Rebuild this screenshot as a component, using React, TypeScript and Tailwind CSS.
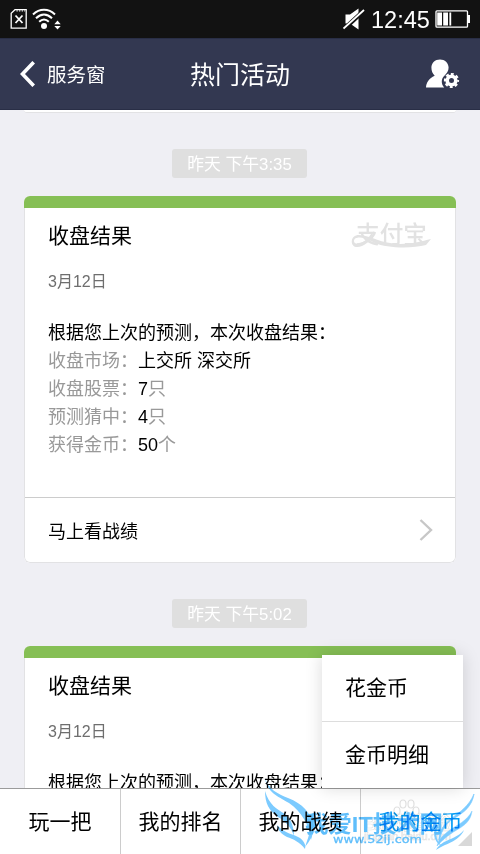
import { ReactNode } from 'react'

interface ResultCardProps {
  title: string
  date: string
}

const rows = [
  { label: '收盘市场：', value: '上交所 深交所', unit: '' },
  { label: '收盘股票：', value: '7', unit: '只' },
  { label: '预测猜中：', value: '4', unit: '只' },
  { label: '获得金币：', value: '50', unit: '个' },
]

const tabs = ['玩一把', '我的排名', '我的战绩', '我的金币']

function StatusBar() {
  return (
    <div className="flex h-[38px] shrink-0 items-center bg-[#121212] text-white">
      <svg className="ml-[10px] h-[22px] w-[18px]" viewBox="0 0 18 22" fill="none" stroke="currentColor">
        <path strokeWidth={1.3} d="M5 1.7H16.2V20.2H1.2V5.2Z" />
        <path strokeWidth={1.2} strokeDasharray="1.2 1.4" d="M6.5 2.8H15" />
        <path strokeWidth={1.8} d="M5.5 7.5L12.5 15M12.5 7.5L5.5 15" />
      </svg>
      <svg className="ml-[4px] h-[22px] w-[30px]" viewBox="0 0 30 22" fill="none" stroke="currentColor" strokeWidth={2}>
        <path d="M1 6.5C7.5 .2 16.5 .2 23 6.5" />
        <path d="M4 10.2C9 5.4 15 5.4 20 10.2" />
        <path d="M7.2 13.7C10.2 10.7 13.8 10.7 16.8 13.7" />
        <circle cx="12" cy="18" r="3" fill="currentColor" stroke="none" />
        <path d="M22.3 16.2L25.5 12.6L28.7 16.2ZM22.3 18L25.5 21.4L28.7 18Z" fill="currentColor" stroke="none" />
      </svg>
      <svg className="ml-auto mr-[6px] h-[22px] w-[22px]" viewBox="0 0 22 22" fill="currentColor">
        <path d="M2.5 6.5H7L15.5 .5V21.5L7 15.5H2.5Z" />
        <path d="M.5 21.5L21.5 2" stroke="#121212" strokeWidth={4.4} />
        <path d="M.5 20.5L21 2" stroke="currentColor" strokeWidth={1.8} />
      </svg>
      <span className="w-[58px] whitespace-nowrap pt-[2px] text-[23.5px] leading-[36px]">12:45</span>
      <svg className="ml-[6px] mr-[10px] h-[18px] w-[35px]" viewBox="0 0 35 18" fill="currentColor">
        <rect x="1" y=".8" width="31.5" height="16.4" rx="1" fill="none" stroke="currentColor" strokeWidth={1.3} />
        <path d="M33 5H35V13H33ZM2.2 2.5H7V15.5H2.2ZM8.2 2.5H13V15.5H8.2ZM14.4 2.5H16.2V15.5H14.4Z" />
      </svg>
    </div>
  )
}

function Header() {
  return (
    <header className="flex h-[72px] shrink-0 items-center border-y border-t-[#292e46] border-b-[#292e46] bg-[#333851] text-white">
      <button className="flex w-[120px] items-center">
        <svg className="ml-[20px] mr-[12px] h-[26px] w-[15px]" viewBox="0 0 15 26" fill="none">
          <path stroke="currentColor" strokeWidth={3.6} d="M13.7 1.2L2.5 13L13.7 24.8" />
        </svg>
        <span className="whitespace-nowrap pt-[2px] text-[19.5px] leading-[30px]">服务窗</span>
      </button>
      <h1 className="flex-1 pt-[2px] text-center text-[25px] leading-[36px]">热门活动</h1>
      <div className="flex w-[120px] justify-end pr-[20px]">
        <svg className="h-[30px] w-[34px]" viewBox="0 0 34 30" fill="currentColor">
          <path d="M14 .5C18.8.5 22.6 4 22.6 8.6C22.6 12.1 20.8 14.5 18.6 16.4C15.2 19.1 14.7 24.5 18.2 28.6H0C.2 23.5 3.1 19.4 8.7 16.8C6.6 14.8 5.4 12 5.4 8.6C5.4 4 9 .5 14 .5Z" />
          <circle cx="25.5" cy="21.5" r="4.3" fill="none" stroke="currentColor" strokeWidth={3.6} />
          <circle cx="25.5" cy="21.5" r="6.4" fill="none" stroke="currentColor" strokeWidth={2.4} strokeDasharray="2.85 2.18" strokeDashoffset={1.42} />
        </svg>
      </div>
    </header>
  )
}

function TimeStamp({ children }: { children: ReactNode }) {
  return (
    <div className="ml-[172px] h-[29px] w-[135px] rounded-[3px] bg-[#dfdfdf] pt-px text-center text-[16.8px] leading-[29px] text-white">
      {children}
    </div>
  )
}

function AlipayLogo() {
  return (
    <svg className="mr-[23px] mt-[11px] h-[32px] w-[82px]" viewBox="0 0 82 32" fill="#e2e2e2">
      <text x="6" y="24" fontSize="24" fontWeight="500" textLength="71" lengthAdjust="spacingAndGlyphs">支付宝</text>
      <path
        d="M24 12C21 23 12 29 6 28C0 27 0 16 9 16C20 16 31 25 50 25C63 25 72 22 81 20L76 26C61 30 36 29 25 24L19 21C14 18 4 17 4 22C4 27 15 25 21 15Z"
      />
    </svg>
  )
}

function ResultCard({ title, date }: ResultCardProps) {
  return (
    <section className="mx-[24px] h-[367px] shrink-0 overflow-hidden rounded-[6px] bg-white">
      <div className="h-[12px] bg-[#86bf55]" />
      <div className="h-[355px] rounded-b-[6px] border border-t-0 border-[#e2e2e4]">
        <div className="flex h-[55px] justify-between pl-[23px]">
          <h2 className="text-[21px] leading-[56px] text-black">{title}</h2>
          <AlipayLogo />
        </div>
        <p className="pl-[23px] text-[16px] leading-[38px] text-[#6e6e6e]">{date}</p>
        <div className="mt-[18px] h-[178px] pl-[23px] text-[18px] leading-[28px] text-[#999]">
          <p className="whitespace-nowrap text-black">根据您上次的预测，本次收盘结果：</p>
          {rows.map((row) => (
            <p key={row.label}>
              {row.label}
              <span className="text-black">{row.value}</span>
              {row.unit}
            </p>
          ))}
        </div>
        <button className="flex h-[65px] w-full items-center justify-between border-t border-[#ccc] pl-[23px] pr-[22px] text-[18px] text-black">
          <span className="pt-[5px]">马上看战绩</span>
          <svg className="h-[22px] w-[14px]" viewBox="0 0 14 22" fill="none">
            <path stroke="#c7c7c7" strokeWidth={2.4} d="M1.5 1L12 11L1.5 21" />
          </svg>
        </button>
      </div>
    </section>
  )
}

function Watermark() {
  return (
    <svg className="pointer-events-none absolute bottom-0 right-0 h-[80px] w-[220px] mix-blend-multiply" viewBox="0 0 220 80">
      <g fill="none" stroke="#e0e0e0" strokeWidth={1.2}>
        <ellipse cx="137" cy="37" rx="3" ry="4" />
        <ellipse cx="143" cy="30" rx="3" ry="4" />
        <ellipse cx="151" cy="30" rx="3" ry="4" />
        <ellipse cx="156" cy="37" rx="3" ry="4" />
        <path d="M147 37C141 42 137 45 140 50H154C158 45 151 42 147 37Z" />
      </g>
      <text x="103" y="56" fontSize="19" fontWeight="700" fill="none" stroke="#e4e4e4" strokeWidth={0.7} textLength="88">Bai百度经验</text>
      <text x="104" y="66" fontSize="11" fill="none" stroke="#e4e4e4" strokeWidth={0.7} textLength="87">jingyan.baidu.com</text>
      <g fill="#7ccbff">
        <path d="M5 4C8 15 18 20 28 24C43 30 50 38 54 52L51 66C49 51 42 38 29 29C17 22 7 18 5 4Z" />
        <path d="M5 17C9 31 17 35 25 40C31 45 34 53 34 62C31 53 25 47 18 43C9 37 5 29 5 17Z" />
        <path d="M17 51C25 60 34 60 40 64C45 68 46 72 45 75C40 68 33 65 27 63C21 60 18 56 17 51Z" />
        <path d="M55 39C58 47 55 61 45 73C50 59 52 52 50 45Z" />
        <path d="M214 20C209 32 200 38 192 44C183 51 178 58 179 69C181 58 184 51 193 45C205 38 212 32 214 20Z" stroke="#7ccbff" strokeWidth={0.7} />
        <path d="M212 37C207 47 197 51 190 56C183 61 179 65 177 72C183 65 191 59 200 54C208 49 211 44 212 37Z" stroke="#7ccbff" strokeWidth={0.5} />
        <path d="M204 56C198 63 190 65 184 68C180 71 177 73 176 76C184 70 199 68 204 56Z" />
        <path d="M179 49C175 57 175 66 182 72C175 69 170 58 179 49Z" />
      </g>
      <g fill="#5fbefb">
        <text x="45" y="58" fontSize="22.5" fontWeight="700" textLength="138" lengthAdjust="spacingAndGlyphs">我爱IT技术网</text>
        <text x="73" y="69" fontFamily="DejaVu Sans" fontSize="11" textLength="89" lengthAdjust="spacingAndGlyphs" stroke="#5fbefb" strokeWidth={0.3}>www.52ij.com</text>
      </g>
      <path d="M212 58V72H198Z" fill="#d8d8d8" />
    </svg>
  )
}

export default function App() {
  return (
    <div className="relative flex h-[854px] w-[480px] flex-col overflow-hidden bg-[#efeff4] font-['Liberation_Sans','Noto_Sans_CJK_SC',sans-serif]">
      <StatusBar />
      <Header />
      <main className="flex h-[678px] shrink-0 flex-col overflow-hidden">
        <div className="mx-[24px] h-[3px] shrink-0 rounded-b-[3px] border-b border-[#e2e2e4] bg-white" />
        <div className="shrink-0 pb-[18px] pt-[36px]">
          <TimeStamp>昨天 下午3:35</TimeStamp>
        </div>
        <ResultCard title="收盘结果" date="3月12日" />
        <div className="shrink-0 pb-[18px] pt-[36px]">
          <TimeStamp>昨天 下午5:02</TimeStamp>
        </div>
        <ResultCard title="收盘结果" date="3月12日" />
      </main>
      <nav className="grid h-[66px] shrink-0 grid-cols-4 border-t border-[#9b9b9b] bg-white text-[21px] text-black">
        {tabs.map((tab, index) => (
          <button
            key={tab}
            className={`whitespace-nowrap pt-[1px] ${index > 0 ? 'border-l border-[#ccc]' : ''} ${
              index === 3 ? 'text-[#009cf5]' : ''
            }`}
          >
            {tab}
          </button>
        ))}
      </nav>

      {/* Submenu of the last tab */}
      <div className="absolute bottom-[66px] right-[17px] w-[141px] bg-white text-[21px] text-black shadow-[0_0_16px_rgba(0,0,0,0.15)]">
        <div className="h-[66px] pl-[23px] leading-[66px]">花金币</div>
        <div className="h-[67px] border-t border-[#ddd] pl-[23px] leading-[66px]">金币明细</div>
      </div>
      <Watermark />
    </div>
  )
}
